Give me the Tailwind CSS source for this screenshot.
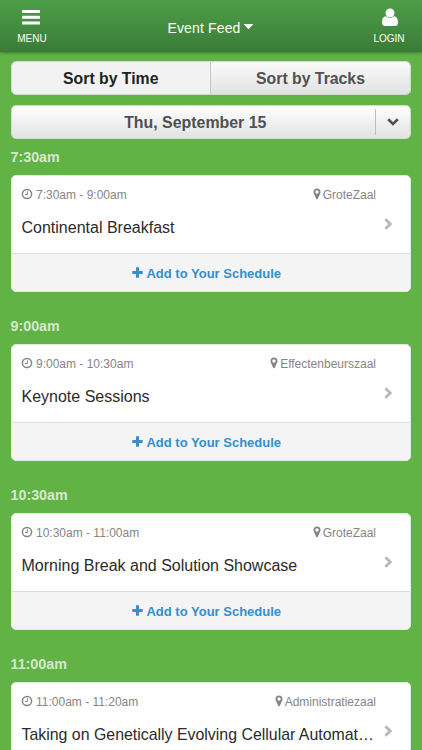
<!DOCTYPE html>
<html lang="en">

<head>
    <meta charset="UTF-8">
    <meta name="viewport" content="width=device-width, initial-scale=1.0">
    <title>Event Feed</title>
    <script src="https://cdn.jsdelivr.net/npm/@tailwindcss/browser@4"></script>
    <style>
        body {
            font-family: "Liberation Sans", Arial, sans-serif;
        }
    </style>
</head>

<body class="bg-[#61b346] h-screen overflow-hidden">
    <!-- Shared icons -->
    <svg class="hidden">
        <symbol id="clock" viewBox="0 0 12 12">
            <circle cx="6" cy="6" r="4.6" fill="none" stroke="currentColor" stroke-width="1.5" />
            <path d="M6.4 3.3v3.2H4" fill="none" stroke="currentColor" stroke-width="1" />
        </symbol>
        <symbol id="pin" viewBox="0 0 8 12">
            <path fill="currentColor" fill-rule="evenodd" d="M4 .5A3.5 3.5 0 0 0 .5 4c0 .7.1 1.2.4 1.7l2.4 5.2c.3.5 1.1.5 1.4 0l2.4-5.2c.3-.5.4-1 .4-1.7A3.5 3.5 0 0 0 4 .5zM4 2.3a1.7 1.7 0 1 1 0 3.4 1.7 1.7 0 0 1 0-3.4z" />
        </symbol>
        <symbol id="chevron" viewBox="0 0 8 12">
            <path d="M1.4 1.2L6.2 6l-4.8 4.8" fill="none" stroke="currentColor" stroke-width="2.8" />
        </symbol>
        <symbol id="plus" viewBox="0 0 11 11">
            <path d="M5.5.3v10.4M.3 5.5h10.4" fill="none" stroke="currentColor" stroke-width="3" />
        </symbol>
    </svg>

    <!-- Header -->
    <header class="relative h-[52px] flex justify-between bg-linear-to-b from-[#4d9f48] to-[#3b7b38] text-white shadow-[0_1px_3px_rgba(0,0,0,0.35)]">
        <a href="#" class="w-16 flex flex-col items-center pt-[9px]">
            <svg class="w-[18px] h-4 mr-[3px]" viewBox="0 0 18 16" fill="currentColor">
                <rect y="1" width="18" height="3" rx="0.6" />
                <rect y="6.8" width="18" height="3" rx="0.6" />
                <rect y="12.6" width="18" height="3" rx="0.6" />
            </svg>
            <span class="text-[10px] leading-3 mt-2">MENU</span>
        </a>
        <h1 class="flex items-center text-sm tracking-[0.01em] pt-1">
            Event Feed
            <svg class="w-[9px] h-[5px] ml-[3px] mb-[3px]" viewBox="0 0 9 5" fill="currentColor">
                <path d="M.4 0h8.2c.4 0 .5.4.2.7L5 4.8c-.3.3-.7.3-1 0L.2.7C-.1.4 0 0 .4 0z" />
            </svg>
        </h1>
        <a href="#" class="w-[66px] flex flex-col items-center pt-2">
            <svg class="w-4 h-[18px] ml-px" viewBox="0 0 16 18" fill="currentColor">
                <circle cx="8" cy="5" r="4.5" />
                <path d="M3.8 8.3c2.4 2.4 6 2.4 8.4 0 2.5.2 3.8 2.8 3.8 6.5 0 2-1.1 3.2-2.9 3.2H2.9C1.1 18 0 16.8 0 14.8 0 11.1 1.3 8.5 3.8 8.3z" />
            </svg>
            <span class="text-[10px] leading-3 mt-[7px]">LOGIN</span>
        </a>
    </header>

    <main class="pl-[10.5px] pr-[11px] pt-[9px]">
        <!-- Sort tabs -->
        <div class="h-[34px] flex rounded-[5px] overflow-hidden border border-[#d0dccb] text-[15.8px] font-bold">
            <button class="w-[199.5px] pt-px border-r border-[#c8c8c8] bg-[#f2f2f2] text-[#222]">Sort by Time</button>
            <button class="flex-1 pt-px bg-linear-to-b from-[#fafafa] to-[#e2e2e2] text-[#505050]">Sort by Tracks</button>
        </div>

        <!-- Day picker -->
        <div class="h-[34px] mt-2.5 flex items-center rounded-[5px] border border-[#d0dccb] bg-linear-to-b from-white to-[#e2e2e2] text-[#505050]">
            <span class="flex-1 pl-1 pt-px text-center text-[15.9px] font-bold">Thu, September 15</span>
            <span class="w-[35px] h-[26px] flex items-center justify-center border-l border-[#bdbdbd]">
                <svg class="w-3 h-2" viewBox="0 0 12 8">
                    <path d="M1.2 1.3L6 6l4.8-4.7" fill="none" stroke="currentColor" stroke-width="2.6" />
                </svg>
            </span>
        </div>

        <!-- Sessions -->
        <section>
            <h2 class="h-9 pt-2 text-[14.3px] leading-5 font-bold text-[#d5e8cf]">7:30am</h2>
            <article class="h-[117px] flex flex-col rounded-[5px] overflow-hidden border border-[#e3ebe0] bg-white">
                <div class="h-[77px] pl-2.5 pr-[34px] pt-[11px] relative">
                    <div class="flex justify-between text-xs leading-4 text-[#858585]">
                        <span class="flex items-center"><svg class="w-3 h-3 -ml-px mr-[3.5px] mb-0.5"><use href="#clock" /></svg>7:30am - 9:00am</span>
                        <span class="flex items-center"><svg class="w-2 h-3 mr-0.5 mb-0.5"><use href="#pin" /></svg>GroteZaal</span>
                    </div>
                    <h3 class="mt-[15px] text-base leading-5 text-[#2b2b2b] truncate">Continental Breakfast</h3>
                    <svg class="absolute right-[18px] top-[42px] w-2 h-3 text-[#b9b9b9]"><use href="#chevron" /></svg>
                </div>
                <a href="#" class="flex-1 flex items-center justify-center border-t border-[#dcdcdc] bg-[#f4f4f4] pr-2 pt-0.5 text-[13px] font-bold text-[#348fcb]">
                    <svg class="w-[11px] h-[11px] mr-[3px] mb-[3px]"><use href="#plus" /></svg>Add to Your Schedule
                </a>
            </article>
        </section>

        <section class="mt-4">
            <h2 class="h-9 pt-2 text-[14.3px] leading-5 font-bold text-[#d5e8cf]">9:00am</h2>
            <article class="h-[117px] flex flex-col rounded-[5px] overflow-hidden border border-[#e3ebe0] bg-white">
                <div class="h-[77px] pl-2.5 pr-[34px] pt-[11px] relative">
                    <div class="flex justify-between text-xs leading-4 text-[#858585]">
                        <span class="flex items-center"><svg class="w-3 h-3 -ml-px mr-[3.5px] mb-0.5"><use href="#clock" /></svg>9:00am - 10:30am</span>
                        <span class="flex items-center"><svg class="w-2 h-3 mr-0.5 mb-0.5"><use href="#pin" /></svg>Effectenbeurszaal</span>
                    </div>
                    <h3 class="mt-[15px] text-base leading-5 text-[#2b2b2b] truncate">Keynote Sessions</h3>
                    <svg class="absolute right-[18px] top-[42px] w-2 h-3 text-[#b9b9b9]"><use href="#chevron" /></svg>
                </div>
                <a href="#" class="flex-1 flex items-center justify-center border-t border-[#dcdcdc] bg-[#f4f4f4] pr-2 pt-0.5 text-[13px] font-bold text-[#348fcb]">
                    <svg class="w-[11px] h-[11px] mr-[3px] mb-[3px]"><use href="#plus" /></svg>Add to Your Schedule
                </a>
            </article>
        </section>

        <section class="mt-4">
            <h2 class="h-9 pt-2 text-[14.3px] leading-5 font-bold text-[#d5e8cf]">10:30am</h2>
            <article class="h-[117px] flex flex-col rounded-[5px] overflow-hidden border border-[#e3ebe0] bg-white">
                <div class="h-[77px] pl-2.5 pr-[34px] pt-[11px] relative">
                    <div class="flex justify-between text-xs leading-4 text-[#858585]">
                        <span class="flex items-center"><svg class="w-3 h-3 -ml-px mr-[3.5px] mb-0.5"><use href="#clock" /></svg>10:30am - 11:00am</span>
                        <span class="flex items-center"><svg class="w-2 h-3 mr-0.5 mb-0.5"><use href="#pin" /></svg>GroteZaal</span>
                    </div>
                    <h3 class="mt-[15px] text-base leading-5 text-[#2b2b2b] truncate">Morning Break and Solution Showcase</h3>
                    <svg class="absolute right-[18px] top-[42px] w-2 h-3 text-[#b9b9b9]"><use href="#chevron" /></svg>
                </div>
                <a href="#" class="flex-1 flex items-center justify-center border-t border-[#dcdcdc] bg-[#f4f4f4] pr-2 pt-0.5 text-[13px] font-bold text-[#348fcb]">
                    <svg class="w-[11px] h-[11px] mr-[3px] mb-[3px]"><use href="#plus" /></svg>Add to Your Schedule
                </a>
            </article>
        </section>

        <section class="mt-4">
            <h2 class="h-9 pt-2 text-[14.3px] leading-5 font-bold text-[#d5e8cf]">11:00am</h2>
            <article class="h-[68px] border-x border-t border-[#e3ebe0] rounded-t-[5px] overflow-hidden bg-white">
                <div class="h-full pl-2.5 pr-[34px] pt-[11px] relative">
                    <div class="flex justify-between text-xs leading-4 text-[#858585]">
                        <span class="flex items-center"><svg class="w-3 h-3 -ml-px mr-[3.5px] mb-0.5"><use href="#clock" /></svg>11:00am - 11:20am</span>
                        <span class="flex items-center"><svg class="w-2 h-3 mr-0.5 mb-0.5"><use href="#pin" /></svg>Administratiezaal</span>
                    </div>
                    <h3 class="mt-[15px] text-[15.9px] leading-5 text-[#2b2b2b] whitespace-nowrap">Taking on Genetically Evolving Cellular Automat…</h3>
                    <svg class="absolute right-[18px] top-[42px] w-2 h-3 text-[#b9b9b9]"><use href="#chevron" /></svg>
                </div>
            </article>
        </section>
    </main>
</body>

</html>
